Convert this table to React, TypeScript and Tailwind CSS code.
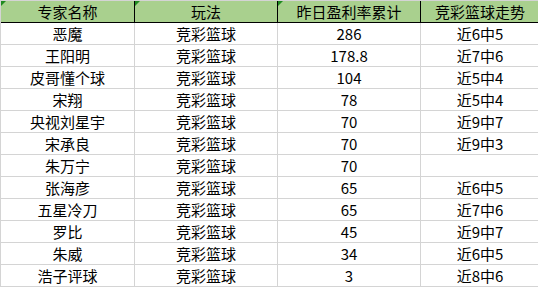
import React from 'react'

type Row = {
  name: string
  play: string
  rate: string
  trend: string
}

const rows: Row[] = [
  { name: '恶魔', play: '竞彩篮球', rate: '286', trend: '近6中5' },
  { name: '王阳明', play: '竞彩篮球', rate: '178.8', trend: '近7中6' },
  { name: '皮哥懂个球', play: '竞彩篮球', rate: '104', trend: '近5中4' },
  { name: '宋翔', play: '竞彩篮球', rate: '78', trend: '近5中4' },
  { name: '央视刘星宇', play: '竞彩篮球', rate: '70', trend: '近9中7' },
  { name: '宋承良', play: '竞彩篮球', rate: '70', trend: '近9中3' },
  { name: '朱万宁', play: '竞彩篮球', rate: '70', trend: '' },
  { name: '张海彦', play: '竞彩篮球', rate: '65', trend: '近6中5' },
  { name: '五星冷刀', play: '竞彩篮球', rate: '65', trend: '近7中6' },
  { name: '罗比', play: '竞彩篮球', rate: '45', trend: '近9中7' },
  { name: '朱威', play: '竞彩篮球', rate: '34', trend: '近6中5' },
  { name: '浩子评球', play: '竞彩篮球', rate: '3', trend: '近8中6' },
]

const headers = ['专家名称', '玩法', '昨日盈利率累计', '竞彩篮球走势']

// small green corner mark, like Excel's "number stored as text" flag
const Flag = () => (
  <span className="absolute left-0 top-0 h-0 w-0 border-t-[5px] border-r-[5px] border-t-[#1f8a1f] border-r-transparent" />
)

export default function App() {
  return (
    <div
      className="w-[538px] h-[288px] overflow-hidden bg-white text-black text-[15px] leading-none"
      style={{ fontFamily: '"Noto Sans CJK SC", "Noto Sans", sans-serif' }}
    >
      <div className="grid grid-cols-[134px_143px_143px_118px] border-t border-l border-[#d4d4d4]">
        {headers.map((h, i) => (
          <div
            key={h}
            className={`relative flex h-[22px] items-center justify-center bg-[#a9d08e] border-b border-black ${
              i < 3 ? 'border-r border-r-black' : ''
            }`}
          >
            {i < 3 && <Flag />}
            {h}
          </div>
        ))}

        {rows.map((r) => (
          <React.Fragment key={r.name}>
            <div className="flex h-[22px] items-center justify-center border-r border-b border-[#d4d4d4]">
              {r.name}
            </div>
            <div className="flex h-[22px] items-center justify-center border-r border-b border-[#d4d4d4]">
              {r.play}
            </div>
            <div className="flex h-[22px] items-center justify-center border-r border-b border-[#d4d4d4]">
              {r.rate}
            </div>
            <div className="flex h-[22px] items-center justify-center border-b border-[#d4d4d4]">
              {r.trend}
            </div>
          </React.Fragment>
        ))}
      </div>
    </div>
  )
}
